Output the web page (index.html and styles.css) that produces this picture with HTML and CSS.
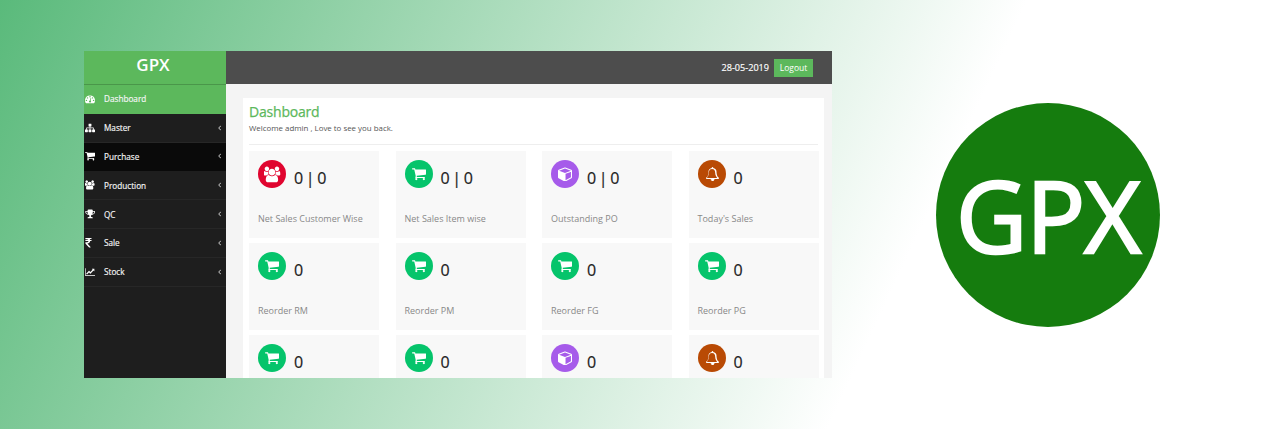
FILE: index.html
```html
<!DOCTYPE html>
<html lang="en">
<head>
<meta charset="utf-8">
<title>GPX</title>
<link rel="stylesheet" href="styles.css">
</head>
<body>
<svg class="defs" width="0" height="0" aria-hidden="true">
  <symbol id="i-cart" viewBox="0 100 1664 1664"><path d="M640 1536q0 52-38 90t-90 38-90-38-38-90 38-90 90-38 90 38 38 90zm896 0q0 52-38 90t-90 38-90-38-38-90 38-90 90-38 90 38 38 90zm128-1088v512q0 24-16.500 42.500t-40.500 21.500l-1044 122q13 60 13 70 0 16-24 64h920q26 0 45 19t19 45-19 45-45 19h-1024q-26 0-45-19t-19-45q0-11 8-31.500t16-36 21.500-40 15.500-29.500l-177-823h-204q-26 0-45-19t-19-45 19-45 45-19h256q16 0 28.500 6.500t19.500 15.500 13 24.500 8 26 5.500 29.500 4.500 26h1201q26 0 45 19t19 45z"/></symbol>
  <symbol id="i-cube" viewBox="0 64 1664 1664"><path d="M896 1629l640-349v-636l-640 233v752zm-64-864l698-254-698-254-698 254zm832-252v768q0 35-18 65t-49 47l-704 384q-28 16-61 16t-61-16l-704-384q-31-17-49-47t-18-65v-768q0-40 23-73t61-47l704-256q22-8 44-8t44 8l704 256q38 14 61 47t23 73z"/></symbol>
  <symbol id="i-bell" viewBox="0 0 1792 1792"><path d="M912 1696q0-16-16-16-59 0-101.500-42.500t-42.500-101.500q0-16-16-16t-16 16q0 73 51.500 124.500t124.500 51.500q16 0 16-16zm-666-288h1300q-266-300-266-832 0-51-24-105t-69-103-121.500-80.500-169.500-31.500-169.500 31.500-121.500 80.500-69 103-24 105q0 532-266 832zm1546 0q0 52-38 90t-90 38h-448q0 106-75 181t-181 75-181-75-75-181h-448q-52 0-90-38t-38-90q50-42 91-88t85-119.500 74.500-158.500 50-206 19.500-260q0-152 117-282.500t307-158.500q-8-19-8-39 0-40 28-68t68-28 68 28 28 68q0 20-8 39 190 28 307 158.500t117 282.500q0 139 19.500 260t50 206 74.500 158.500 85 119.500 91 88z"/></symbol>
  <symbol id="i-users" viewBox="-10 30 1940 1740"><path d="M529 896q-162 5-265 128h-134q-82 0-138-40.500t-56-118.500q0-353 124-353 6 0 43.500 21t97.500 42.500 119 21.500q67 0 133-23-5 37-5 66 0 139 81 256zm1071 637q0 120-73 189.500t-194 69.500h-874q-121 0-194-69.500t-73-189.500q0-53 3.500-103.500t14-109 26.500-108.500 43-97.500 62-81 85.500-53.500 111.500-20q10 0 43 21.500t73 48 107 48 135 21.500 135-21.500 107-48 73-48 43-21.500q61 0 111.500 20t85.500 53.500 62 81 43 97.500 26.500 108.500 14 109 3.500 103.500zm-1024-1277q0 106-75 181t-181 75-181-75-75-181 75-181 181-75 181 75 75 181zm704 384q0 159-112.500 271.500t-271.500 112.500-271.500-112.500-112.500-271.500 112.500-271.500 271.500-112.500 271.500 112.500 112.500 271.500zm576 225q0 78-56 118.500t-138 40.500h-134q-103-123-265-128 81-117 81-256 0-29-5-66 66 23 133 23 59 0 119-21.500t97.500-42.500 43.500-21q124 0 124 353zm-128-609q0 106-75 181t-181 75-181-75-75-181 75-181 181-75 181 75 75 181z"/></symbol>
  <symbol id="i-dash" viewBox="0 100 1792 1600"><path d="M384 1152q0-53-37.500-90.500t-90.500-37.500-90.500 37.500-37.500 90.500 37.500 90.500 90.500 37.500 90.500-37.500 37.500-90.500zm192-448q0-53-37.500-90.500t-90.500-37.500-90.500 37.500-37.500 90.500 37.500 90.500 90.500 37.500 90.500-37.500 37.500-90.500zm428 481l101-382q6-26-7.500-48.500t-38.500-29.500-48 6.500-30 39.500l-101 382q-60 5-107 43.500t-63 98.500q-20 77 20 146t117 89 146-20 89-117q16-60-6-117t-72-91zm660-33q0-53-37.500-90.500t-90.500-37.500-90.500 37.500-37.500 90.500 37.500 90.500 90.500 37.500 90.500-37.500 37.500-90.500zm-640-640q0-53-37.500-90.500t-90.500-37.500-90.500 37.500-37.500 90.500 37.500 90.500 90.500 37.500 90.500-37.500 37.500-90.500zm448 192q0-53-37.500-90.500t-90.500-37.500-90.500 37.500-37.500 90.500 37.500 90.500 90.500 37.500 90.500-37.500 37.500-90.500zm320 448q0 261-141 483-19 29-54 29h-1402q-35 0-54-29-141-221-141-483 0-182 71-348t191-286 286-191 348-71 348 71 286 191 191 286 71 348z"/></symbol>
  <symbol id="i-sitemap" viewBox="0 100 1792 1600"><path d="M1792 1248v320q0 40-28 68t-68 28h-320q-40 0-68-28t-28-68v-320q0-40 28-68t68-28h96v-192h-512v192h96q40 0 68 28t28 68v320q0 40-28 68t-68 28h-320q-40 0-68-28t-28-68v-320q0-40 28-68t68-28h96v-192h-512v192h96q40 0 68 28t28 68v320q0 40-28 68t-68 28h-320q-40 0-68-28t-28-68v-320q0-40 28-68t68-28h96v-192q0-52 38-90t90-38h512v-192h-96q-40 0-68-28t-28-68v-320q0-40 28-68t68-28h320q40 0 68 28t28 68v320q0 40-28 68t-68 28h-96v192h512q52 0 90 38t38 90v192h96q40 0 68 28t28 68z"/></symbol>
  <symbol id="i-trophy" viewBox="0 130 1728 1560"><path d="M522 883q-74-162-74-371h-256v96q0 78 94.500 162t235.500 113zm1078-275v-96h-256q0 209-74 371 141-29 235.500-113t94.500-162zm128-128v128q0 71-41.500 143t-112 130-173 97.500-215.500 44.500q-42 54-95 95-38 34-52.500 72.500t-14.500 89.500q0 54 30.500 91t97.500 37q75 0 133.500 45.500t58.500 114.500v64q0 14-9 23t-23 9h-832q-14 0-23-9t-9-23v-64q0-69 58.500-114.500t133.500-45.500q67 0 97.500-37t30.500-91q0-51-14.500-89.500t-52.500-72.500q-53-41-95-95-113-5-215.500-44.500t-173-97.500-112-130-41.500-143v-128q0-40 28-68t68-28h288v-96q0-66 47-113t113-47h576q66 0 113 47t47 113v96h288q40 0 68 28t28 68z"/></symbol>
  <symbol id="i-inr" viewBox="390 160 1000 1460" preserveAspectRatio="xMinYMid meet"><path d="M1345 470v102q0 14-9 23t-23 9h-168q-23 144-129 234t-276 110q167 178 459 536 14 16 4 34-8 18-29 18h-195q-16 0-25-12-306-367-498-571-9-9-9-22v-127q0-13 9.500-22.500t22.500-9.500h112q132 0 212.500-43t102.500-125h-427q-14 0-23-9t-9-23v-102q0-14 9-23t23-9h413q-57-113-268-113h-145q-13 0-22.500-9.500t-9.500-22.500v-133q0-14 9-23t23-9h832q14 0 23 9t9 23v102q0 14-9 23t-23 9h-233q47 61 64 144h171q14 0 23 9t9 23z"/></symbol>
  <symbol id="i-chart" viewBox="0 110 2048 1600"><path d="M2048 1536v128h-2048v-1536h128v1408h1920zm-128-1248v435q0 21-19.500 29.500t-35.500-7.500l-121-121-633 633q-10 10-23 10t-23-10l-233-233-416 416-192-192 585-585q10-10 23-10t23 10l233 233 464-464-121-121q-16-16-7.500-35.500t29.500-19.500h435q14 0 23 9t9 23z"/></symbol>
  <symbol id="i-angle" viewBox="0 400 640 1120"><path d="M627 544q0 13-10 23l-393 393 393 393q10 10 10 23t-10 23l-50 50q-10 10-23 10t-23-10l-466-466q-10-10-10-23t10-23l466-466q10-10 23-10t23 10l50 50q10 10 10 23z"/></symbol>
</svg>

<div class="banner">
  <div class="app">
    <aside class="sidebar">
      <div class="brand">GPX</div>
      <nav class="menu">
        <a class="item active"><svg class="mi"><use href="#i-dash"/></svg><span>Dashboard</span></a>
        <a class="item"><svg class="mi"><use href="#i-sitemap"/></svg><span>Master</span><svg class="chev"><use href="#i-angle"/></svg></a>
        <a class="item hover"><svg class="mi"><use href="#i-cart"/></svg><span>Purchase</span><svg class="chev"><use href="#i-angle"/></svg></a>
        <a class="item"><svg class="mi"><use href="#i-users"/></svg><span>Production</span><svg class="chev"><use href="#i-angle"/></svg></a>
        <a class="item"><svg class="mi"><use href="#i-trophy"/></svg><span>QC</span><svg class="chev"><use href="#i-angle"/></svg></a>
        <a class="item"><svg class="mi"><use href="#i-inr"/></svg><span>Sale</span><svg class="chev"><use href="#i-angle"/></svg></a>
        <a class="item"><svg class="mi"><use href="#i-chart"/></svg><span>Stock</span><svg class="chev"><use href="#i-angle"/></svg></a>
      </nav>
    </aside>
    <div class="main">
      <header class="topbar">
        <span class="date">28-05-2019</span>
        <a class="logout">Logout</a>
      </header>
      <div class="content">
        <section class="panel">
          <h1 class="title">Dashboard</h1>
          <p class="welcome">Welcome admin , Love to see you back.</p>
          <div class="grid">
            <div class="card"><div class="stat"><span class="badge red"><svg class="bi wide"><use href="#i-users"/></svg></span><span class="num">0 | 0</span></div><div class="label">Net Sales Customer Wise</div></div>
            <div class="card"><div class="stat"><span class="badge green"><svg class="bi"><use href="#i-cart"/></svg></span><span class="num">0 | 0</span></div><div class="label">Net Sales Item wise</div></div>
            <div class="card"><div class="stat"><span class="badge purple"><svg class="bi"><use href="#i-cube"/></svg></span><span class="num">0 | 0</span></div><div class="label">Outstanding PO</div></div>
            <div class="card"><div class="stat"><span class="badge rust"><svg class="bi"><use href="#i-bell"/></svg></span><span class="num">0</span></div><div class="label">Today's Sales</div></div>
            <div class="card"><div class="stat"><span class="badge green"><svg class="bi"><use href="#i-cart"/></svg></span><span class="num">0</span></div><div class="label">Reorder RM</div></div>
            <div class="card"><div class="stat"><span class="badge green"><svg class="bi"><use href="#i-cart"/></svg></span><span class="num">0</span></div><div class="label">Reorder PM</div></div>
            <div class="card"><div class="stat"><span class="badge green"><svg class="bi"><use href="#i-cart"/></svg></span><span class="num">0</span></div><div class="label">Reorder FG</div></div>
            <div class="card"><div class="stat"><span class="badge green"><svg class="bi"><use href="#i-cart"/></svg></span><span class="num">0</span></div><div class="label">Reorder PG</div></div>
            <div class="card"><div class="stat"><span class="badge green"><svg class="bi"><use href="#i-cart"/></svg></span><span class="num">0</span></div></div>
            <div class="card"><div class="stat"><span class="badge green"><svg class="bi"><use href="#i-cart"/></svg></span><span class="num">0</span></div></div>
            <div class="card"><div class="stat"><span class="badge purple"><svg class="bi"><use href="#i-cube"/></svg></span><span class="num">0</span></div></div>
            <div class="card"><div class="stat"><span class="badge rust"><svg class="bi"><use href="#i-bell"/></svg></span><span class="num">0</span></div></div>
          </div>
        </section>
      </div>
    </div>
  </div>
  <div class="logo">GPX</div>
</div>
</body>
</html>
```

FILE: styles.css
```css
* { box-sizing: border-box; }
html, body { margin: 0; height: 429px; overflow: hidden; }
body { font-family: "Open Sans", sans-serif; background: #fff; }
.defs { position: absolute; }

.banner {
  height: 429px;
  padding: 51px 0 0 84px;
  display: flex;
  align-items: flex-start;
  background: linear-gradient(115deg, #5aba7b 0%, #ffffff 70%);
}

.app {
  width: 748px;
  height: 327px;
  display: flex;
  overflow: hidden;
  flex: none;
}

.sidebar { width: 142px; flex: none; background: #1e1e1e; }
.brand {
  height: 34px;
  padding-right: 4px;
  background: #5cb85c;
  border-bottom: 1px solid #4a964a;
  color: #fff;
  font-size: 17px;
  font-weight: 600;
  line-height: 27px;
  text-align: center;
}
.item {
  height: 28.8px;
  display: flex;
  align-items: center;
  padding: 0 4px 0 1px;
  color: #f6f6f6;
  font-size: 8.2px;
  -webkit-text-stroke: 0.15px #f6f6f6;
  border-bottom: 1px solid #272727;
}
.item.active { background: #5cb85c; border-bottom-color: #5cb85c; }
.item.hover { background: #0a0a0a; border-bottom-color: #0a0a0a; }
.item span { flex: 1; }
.mi { width: 10px; height: 10px; margin-right: 9px; fill: #fff; flex: none; }
.chev { width: 3px; height: 6px; fill: #eee; flex: none; margin-right: 1px; }

.main { flex: 1; min-width: 0; display: flex; flex-direction: column; background: #f4f4f4; }
.topbar {
  height: 33px;
  flex: none;
  background: #4d4d4d;
  display: flex;
  align-items: center;
  justify-content: flex-end;
  gap: 5px;
  padding: 0 19px 0 0;
  color: #fff;
}
.date { font-size: 9.1px; -webkit-text-stroke: 0.15px #fff; }
.logout {
  width: 39px;
  height: 18px;
  margin-top: 1px;
  background: #5cb85c;
  font-size: 8.5px;
  line-height: 18px;
  text-align: center;
}

.content { flex: 1; padding: 14px 8px 0 17px; }
.panel { height: 100%; background: #fff; padding: 4px 6px 0; }
.title {
  margin: 0;
  color: #5cb85c;
  font-size: 14px;
  font-weight: 400;
  letter-spacing: -0.2px;
  -webkit-text-stroke: 0.25px #5cb85c;
  line-height: 20px;
}
.welcome {
  margin: 0;
  padding: 0 0 9px;
  border-bottom: 1px solid #eee;
  color: #555;
  font-size: 7.9px;
  line-height: 13px;
}
.grid {
  margin-top: 6px;
  display: grid;
  grid-template-columns: repeat(4, 130px);
  grid-auto-rows: 87px;
  column-gap: 16.5px;
  row-gap: 5px;
}
.card { background: #f8f8f8; padding: 9px 9px 0; }
.stat { display: flex; align-items: center; gap: 8px; height: 28px; }
.badge {
  width: 28px;
  height: 28px;
  border-radius: 50%;
  display: flex;
  align-items: center;
  justify-content: center;
  flex: none;
}
.red { background: #e0052f; }
.green { background: #05c46b; }
.purple { background: #a65bea; }
.rust { background: #b94a04; }
.bi { width: 14px; height: 14px; fill: #fff; }
.bi.wide { width: 17px; height: 17px; }
.num { padding-top: 7px; color: #222; font-size: 16px; line-height: 22px; word-spacing: -1.5px; -webkit-text-stroke: 0.2px #222; }
.label { margin-top: 24px; color: #888; font-size: 9px; line-height: 14px; }

.logo {
  width: 224px;
  height: 224px;
  flex: none;
  margin: 52px 0 0 104px;
  border-radius: 50%;
  background: #157c0e;
  color: #fff;
  font-size: 98px;
  letter-spacing: -1px;
  -webkit-text-stroke: 2.5px #fff;
  line-height: 224px;
  text-align: center;
}
```
